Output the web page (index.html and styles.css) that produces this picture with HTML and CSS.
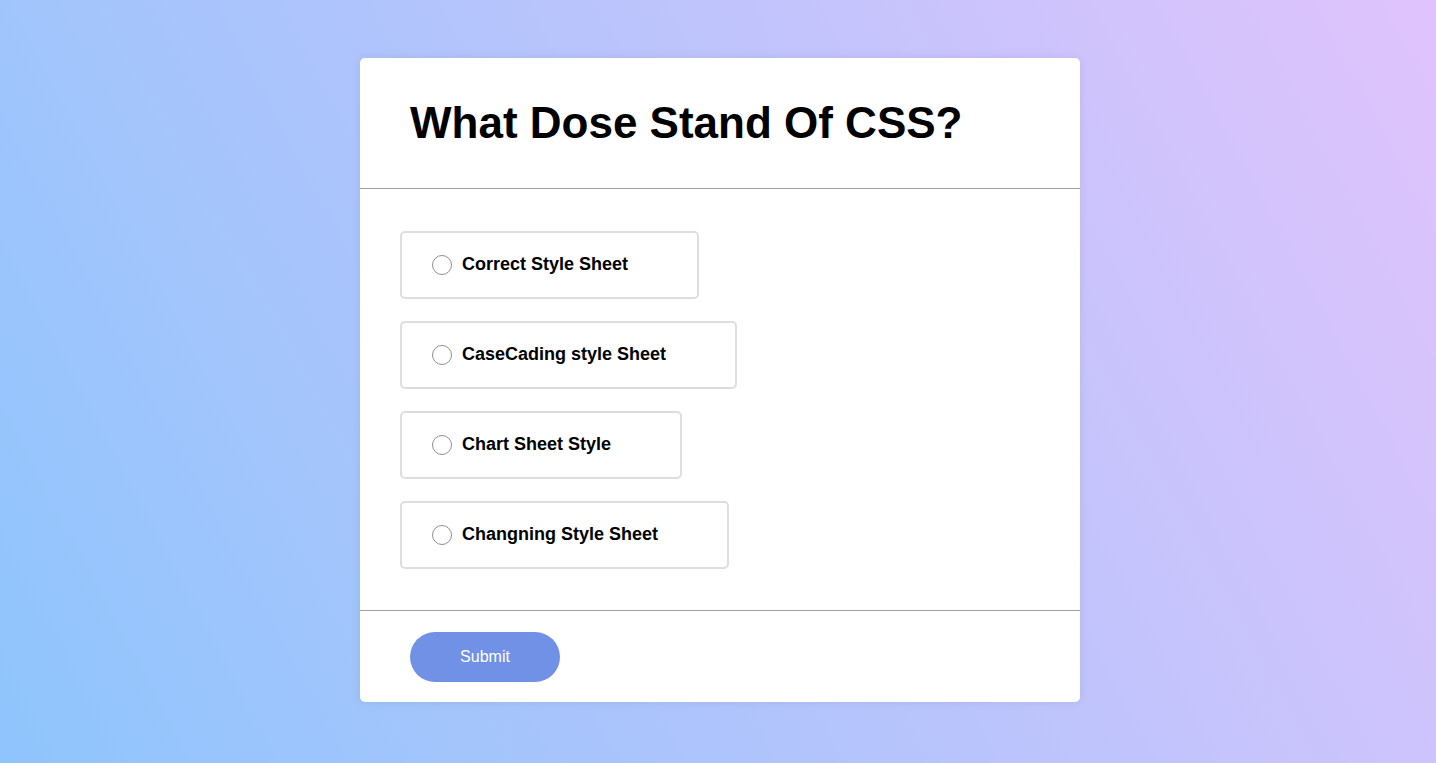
FILE: index.html
```html
<!DOCTYPE html>
<html lang="en">
<head>
<meta charset="utf-8">
<title>Quiz</title>
<link rel="stylesheet" href="styles.css">
</head>
<body>
<main class="page">
  <form class="card">
    <header class="card-head">
      <h1 class="question">What Dose Stand Of CSS?</h1>
    </header>
    <section class="options">
      <label class="option"><input class="radio" type="radio" name="q"><span class="option-text">Correct Style Sheet</span></label>
      <label class="option"><input class="radio" type="radio" name="q"><span class="option-text">CaseCading style Sheet</span></label>
      <label class="option"><input class="radio" type="radio" name="q"><span class="option-text">Chart Sheet Style</span></label>
      <label class="option"><input class="radio" type="radio" name="q"><span class="option-text">Changning Style Sheet</span></label>
    </section>
    <footer class="card-foot">
      <button class="submit" type="button">Submit</button>
    </footer>
  </form>
</main>
</body>
</html>
```
FILE: styles.css
```css
* { box-sizing: border-box; }
html, body { margin: 0; padding: 0; }
body {
  font-family: "Liberation Sans", Arial, sans-serif;
  background-image: linear-gradient(62deg, #8ec5fc 0%, #e0c3fc 100%);
  min-height: 100vh;
}
.page {
  min-height: 100vh;
  display: flex;
  align-items: center;
  justify-content: center;
  padding: 0 0 3px 4px;
}
.card {
  width: 720px;
  background: #fff;
  border-radius: 5px;
  box-shadow: 0 0 10px rgba(0, 0, 0, 0.08);
  margin: 0;
}
.card-head {
  padding: 40px 50px;
  border-bottom: 1px solid #a0a0a0;
}
.question {
  margin: 0;
  font-size: 44px;
  line-height: 50px;
  font-weight: 700;
  color: #000;
}
.options {
  padding: 42px 40px 41px;
  display: flex;
  flex-direction: column;
  align-items: flex-start;
  gap: 22px;
}
.option {
  display: flex;
  align-items: center;
  height: 68px;
  padding: 0 69px 0 30px;
  border: 2px solid #dedede;
  border-radius: 5px;
  cursor: pointer;
}
.radio {
  appearance: none;
  -webkit-appearance: none;
  width: 20px;
  height: 20px;
  margin: 0 10px 0 0;
  border: 1px solid #8f8f8f;
  border-radius: 50%;
  background: #fff;
  flex: none;
}
.option-text {
  font-size: 18px;
  font-weight: 700;
  color: #000;
  line-height: 21px;
  position: relative;
  top: -1px;
}
.card-foot {
  border-top: 1px solid #a0a0a0;
  padding: 21px 50px 20px;
}
.submit {
  display: block;
  width: 150px;
  height: 50px;
  border: none;
  border-radius: 25px;
  background: #7191e6;
  color: #fff;
  font-family: "Liberation Sans", Arial, sans-serif;
  font-size: 16px;
  cursor: pointer;
}
```
